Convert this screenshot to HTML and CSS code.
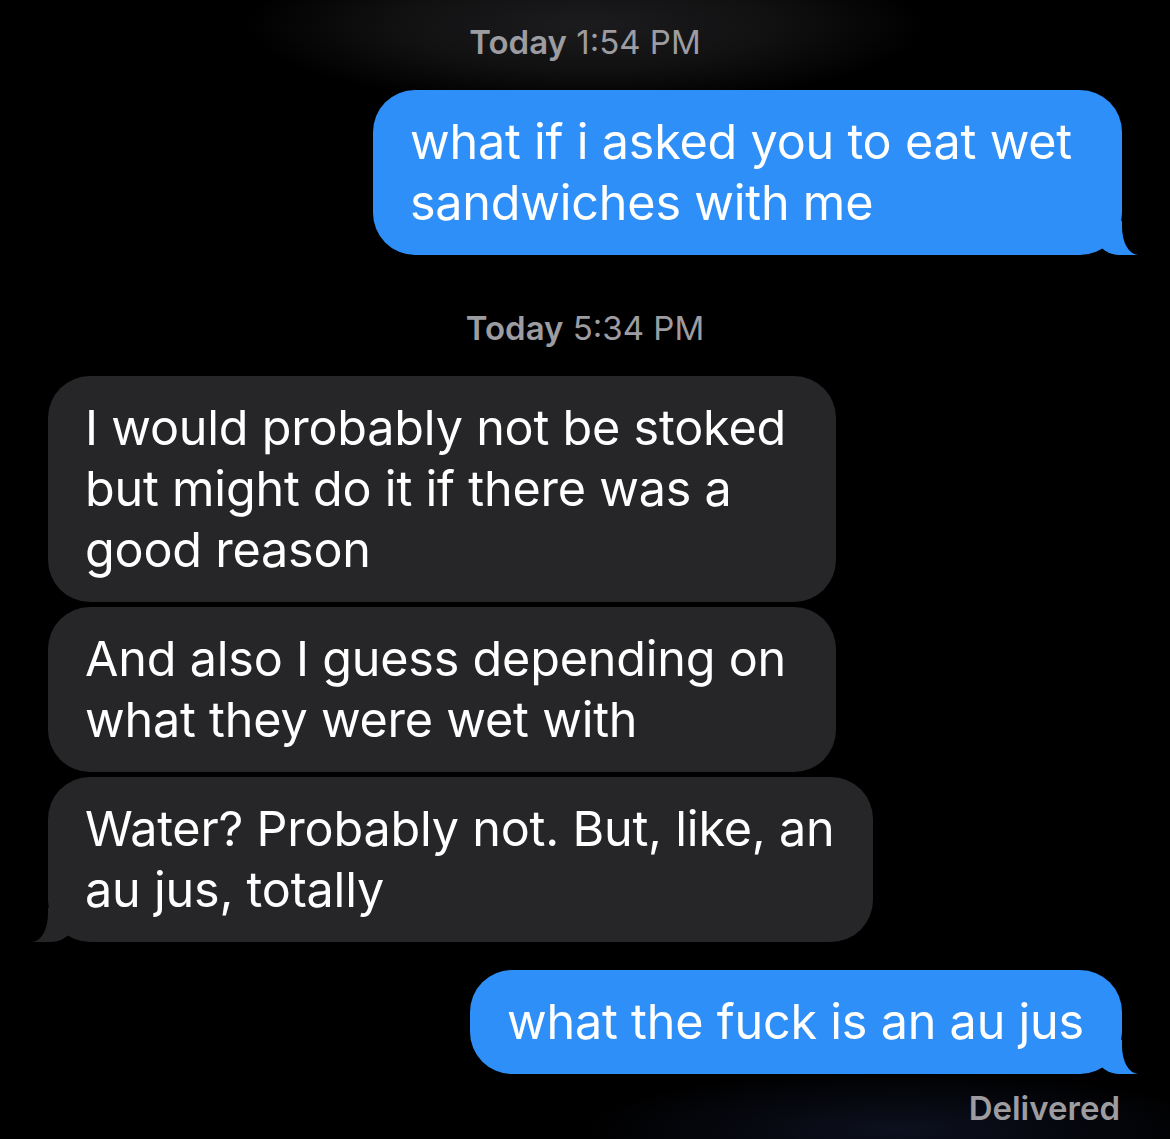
FILE: index.html
```html
<!DOCTYPE html>
<html lang="en">
<head>
<meta charset="utf-8">
<title>Messages</title>
<link rel="stylesheet" href="styles.css">
</head>
<body>
<main class="thread">
  <div class="stamp"><b>Today</b> 1:54 PM</div>
  <div class="row row-sent gap-after-stamp">
    <div class="bubble sent tail pad-wide">what if i asked you to eat wet<br>sandwiches with me</div>
  </div>

  <div class="stamp stamp-2"><b>Today</b> 5:34 PM</div>
  <div class="row row-recv gap-after-stamp">
    <div class="bubble recv pad-wide">I would probably not be stoked<br>but might do it if there was a<br>good reason</div>
  </div>
  <div class="row row-recv gap-small">
    <div class="bubble recv pad-wide">And also I guess depending on<br>what they were wet with</div>
  </div>
  <div class="row row-recv gap-small">
    <div class="bubble recv tail">Water? Probably not. But, like, an<br>au jus, totally</div>
  </div>

  <div class="row row-sent gap-group">
    <div class="bubble sent tail">what the fuck is an au jus</div>
  </div>
  <div class="delivered">Delivered</div>
</main>
</body>
</html>
```

FILE: styles.css
```css
html, body {
  margin: 0;
  padding: 0;
  background: #000;
}

body {
  width: 1170px;
  height: 1139px;
  overflow: hidden;
  font-family: Inter, "Noto Sans", "Liberation Sans", sans-serif;
  background:
    radial-gradient(ellipse 340px 80px at 585px 25px, #1c1c1e 0%, rgba(28,28,30,0.6) 55%, rgba(0,0,0,0) 100%),
    radial-gradient(ellipse 320px 60px at 900px 1130px, rgba(14,18,34,0.9) 0%, rgba(0,0,0,0) 100%),
    #000;
}

.thread {
  display: flex;
  flex-direction: column;
  padding: 22px 48px 0 48px;
}

.stamp {
  text-align: center;
  color: #9c9ca1;
  font-size: 33px;
  line-height: 40px;
  font-weight: 400;
}

.stamp b {
  font-weight: 600;
}

.stamp-2 {
  margin-top: 53px;
}

.row {
  display: flex;
}

.row-sent {
  justify-content: flex-end;
}

.row-recv {
  justify-content: flex-start;
}

.gap-after-stamp {
  margin-top: 28px;
}

.gap-small {
  margin-top: 5px;
}

.gap-group {
  margin-top: 28px;
}

.bubble {
  position: relative;
  font-size: 48.5px;
  line-height: 61px;
  padding: 21px 38px 22px 37px;
  border-radius: 42px;
  color: #fff;
  white-space: nowrap;
  letter-spacing: -0.2px;
}

.pad-wide {
  padding-right: 50px;
}

.sent {
  background: #2f8ff8;
}

.recv {
  background: #262628;
}

.tail::before,
.tail::after {
  content: "";
  position: absolute;
  bottom: 0;
}

.sent.tail::before {
  right: -16px;
  width: 40px;
  height: 34px;
  background: #2f8ff8;
  border-bottom-left-radius: 22px 16px;
}

.sent.tail::after {
  left: 100%;
  width: 34px;
  height: 34px;
  background: #000;
  border-bottom-left-radius: 16px 28px;
}

.recv.tail::before {
  left: -16px;
  width: 40px;
  height: 34px;
  background: #262628;
  border-bottom-right-radius: 22px 16px;
}

.recv.tail::after {
  right: 100%;
  width: 34px;
  height: 34px;
  background: #000;
  border-bottom-right-radius: 16px 28px;
}

.delivered {
  text-align: right;
  margin-top: 14px;
  padding-right: 2px;
  color: #9c9ca1;
  font-size: 33px;
  line-height: 40px;
  font-weight: 600;
}
```
